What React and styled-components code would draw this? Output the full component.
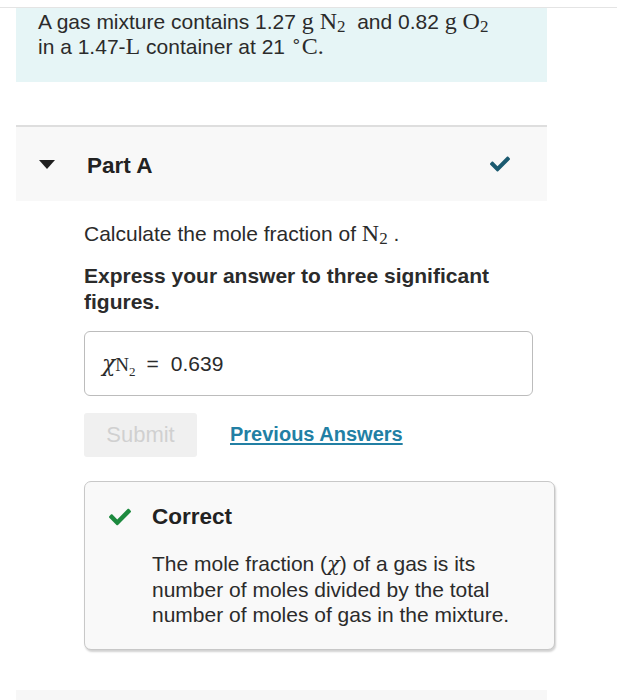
import React from 'react';
import styled, { createGlobalStyle } from 'styled-components';
import { FaCheck } from 'react-icons/fa';

const GlobalStyle = createGlobalStyle`
  html, body {
    margin: 0;
    padding: 0;
    background: #ffffff;
  }
  body {
    font-family: "Liberation Sans", Arial, sans-serif;
    color: #2b2b2b;
  }
`

const Page = styled.div`
  margin-top: 7px;
  border-top: 1px solid #e4e4e4;
`

const Column = styled.div`
  margin-left: 16px;
  width: 531px;
`

const ProblemBox = styled.div`
  background-color: #e6f5f6;
  padding: 1px 22px 25px 22px;
  font-size: 21px;
  line-height: 24px;
  height: 48px;
  white-space: nowrap;
`

const M = styled.span`
  font-family: "Liberation Serif", "Times New Roman", serif;
  font-size: ${p => p.$size || 24}px;
`

const Chi = styled.span`
  font-family: "DejaVu Serif", "Liberation Serif", serif;
  font-style: italic;
  font-size: ${p => p.$size || 21}px;
  line-height: 0;
`

const Sub = styled.sub`
  font-family: "Liberation Serif", "Times New Roman", serif;
  font-size: ${p => p.$size || 17}px;
  vertical-align: ${p => p.$drop || -3}px;
  line-height: 0;
`

const Variable = styled.span`
  line-height: 26px;
`

const PartHeader = styled.div`
  margin-top: 43px;
  border-top: 2px solid #dedede;
  background-color: #f8f8f8;
  height: 74px;
  display: flex;
  align-items: center;
  padding: 0 37px 0 23px;
`

const Triangle = styled.div`
  width: 0;
  height: 0;
  border-left: 8px solid transparent;
  border-right: 8px solid transparent;
  border-top: 9px solid #1f1f1f;
  margin-right: 32px;
  margin-top: 1px;
`

const PartTitle = styled.div`
  font-size: 22.5px;
  font-weight: 700;
  color: #222;
  flex: 1;
  margin-top: 3px;
`

const HeaderCheck = styled.div`
  color: #1b5a70;
  display: flex;
  font-size: 20px;
`

const Content = styled.div`
  padding: 19px 14px 0 68px;
  font-size: 21px;
`

const Question = styled.div`
  line-height: 26px;
`

const Instruction = styled.div`
  font-weight: 700;
  line-height: 26px;
  margin-top: 16px;
  width: 440px;
`

const AnswerBox = styled.div`
  margin-top: 16px;
  height: 62px;
  border: 1px solid #bcbcbc;
  border-radius: 6px;
  display: flex;
  align-items: center;
  padding: 1px 18px 0 17px;
`

const Equals = styled.span`
  margin: 0 12px 0 11px;
`

const ButtonRow = styled.div`
  display: flex;
  align-items: center;
  margin-top: 17px;
`

const SubmitButton = styled.div`
  width: 113px;
  height: 44px;
  background-color: #f0f0f0;
  border-radius: 3px;
  color: #d0d0d0;
  font-size: 22px;
  display: flex;
  align-items: center;
  justify-content: center;
`

const Link = styled.a`
  margin-left: 33px;
  color: #227fa4;
  font-size: 20px;
  font-weight: 700;
  text-decoration: underline;
  text-underline-offset: 2px;
  margin-top: -2px;
`

const Feedback = styled.div`
  margin-top: 24px;
  width: 471px;
  box-sizing: border-box;
  border: 1px solid #c8c8c8;
  border-radius: 7px;
  background-color: #f9f9f9;
  box-shadow: 1px 2px 2px rgba(0, 0, 0, 0.18);
  padding: 23px 22px 21px 24px;
  display: grid;
  grid-template-columns: 43px 1fr;
`

const FeedbackCheck = styled.div`
  color: #1d8a3f;
  font-size: 22px;
  display: flex;
  align-items: center;
  height: 24px;
`

const FeedbackTitle = styled.div`
  font-size: 22.5px;
  font-weight: 700;
  color: #222;
  line-height: 24px;
`

const FeedbackText = styled.div`
  grid-column: 2;
  margin-top: 22px;
  line-height: 25.5px;
`

const BottomStrip = styled.div`
  margin-top: 40px;
  height: 20px;
  background-color: #f7f7f7;
`

const App = () => {
  return (
    <Page>
      <GlobalStyle />
      <Column>
        <ProblemBox>
          A gas mixture contains 1.27 <M>g</M> <M>N</M><Sub>2</Sub>&nbsp; and 0.82 <M>g</M> <M>O</M><Sub>2</Sub>
          <br />
          in a 1.47-<M>L</M> container at 21 <Sub $size={17} $drop={8}>∘</Sub><M>C</M><M>.</M>
        </ProblemBox>

        <PartHeader>
          <Triangle />
          <PartTitle>Part A</PartTitle>
          <HeaderCheck>
            <FaCheck />
          </HeaderCheck>
        </PartHeader>

        <Content>
          <Question>
            Calculate the mole fraction of <M>N</M><Sub>2</Sub> .
          </Question>
          <Instruction>Express your answer to three significant figures.</Instruction>

          <AnswerBox>
            <Variable>
              <Chi $size={22}>χ</Chi>
              <M $size={19}>N</M>
              <Sub $size={13} $drop={-5}>2</Sub>
            </Variable>
            <Equals>=</Equals>
            0.639
          </AnswerBox>

          <ButtonRow>
            <SubmitButton>Submit</SubmitButton>
            <Link>Previous Answers</Link>
          </ButtonRow>

          <Feedback>
            <FeedbackCheck>
              <FaCheck />
            </FeedbackCheck>
            <FeedbackTitle>Correct</FeedbackTitle>
            <FeedbackText>
              The mole fraction (<Chi>χ</Chi>) of a gas is its number of moles divided by the total
              number of moles of gas in the mixture.
            </FeedbackText>
          </Feedback>
        </Content>

        <BottomStrip />
      </Column>
    </Page>
  );
};

export default App;
